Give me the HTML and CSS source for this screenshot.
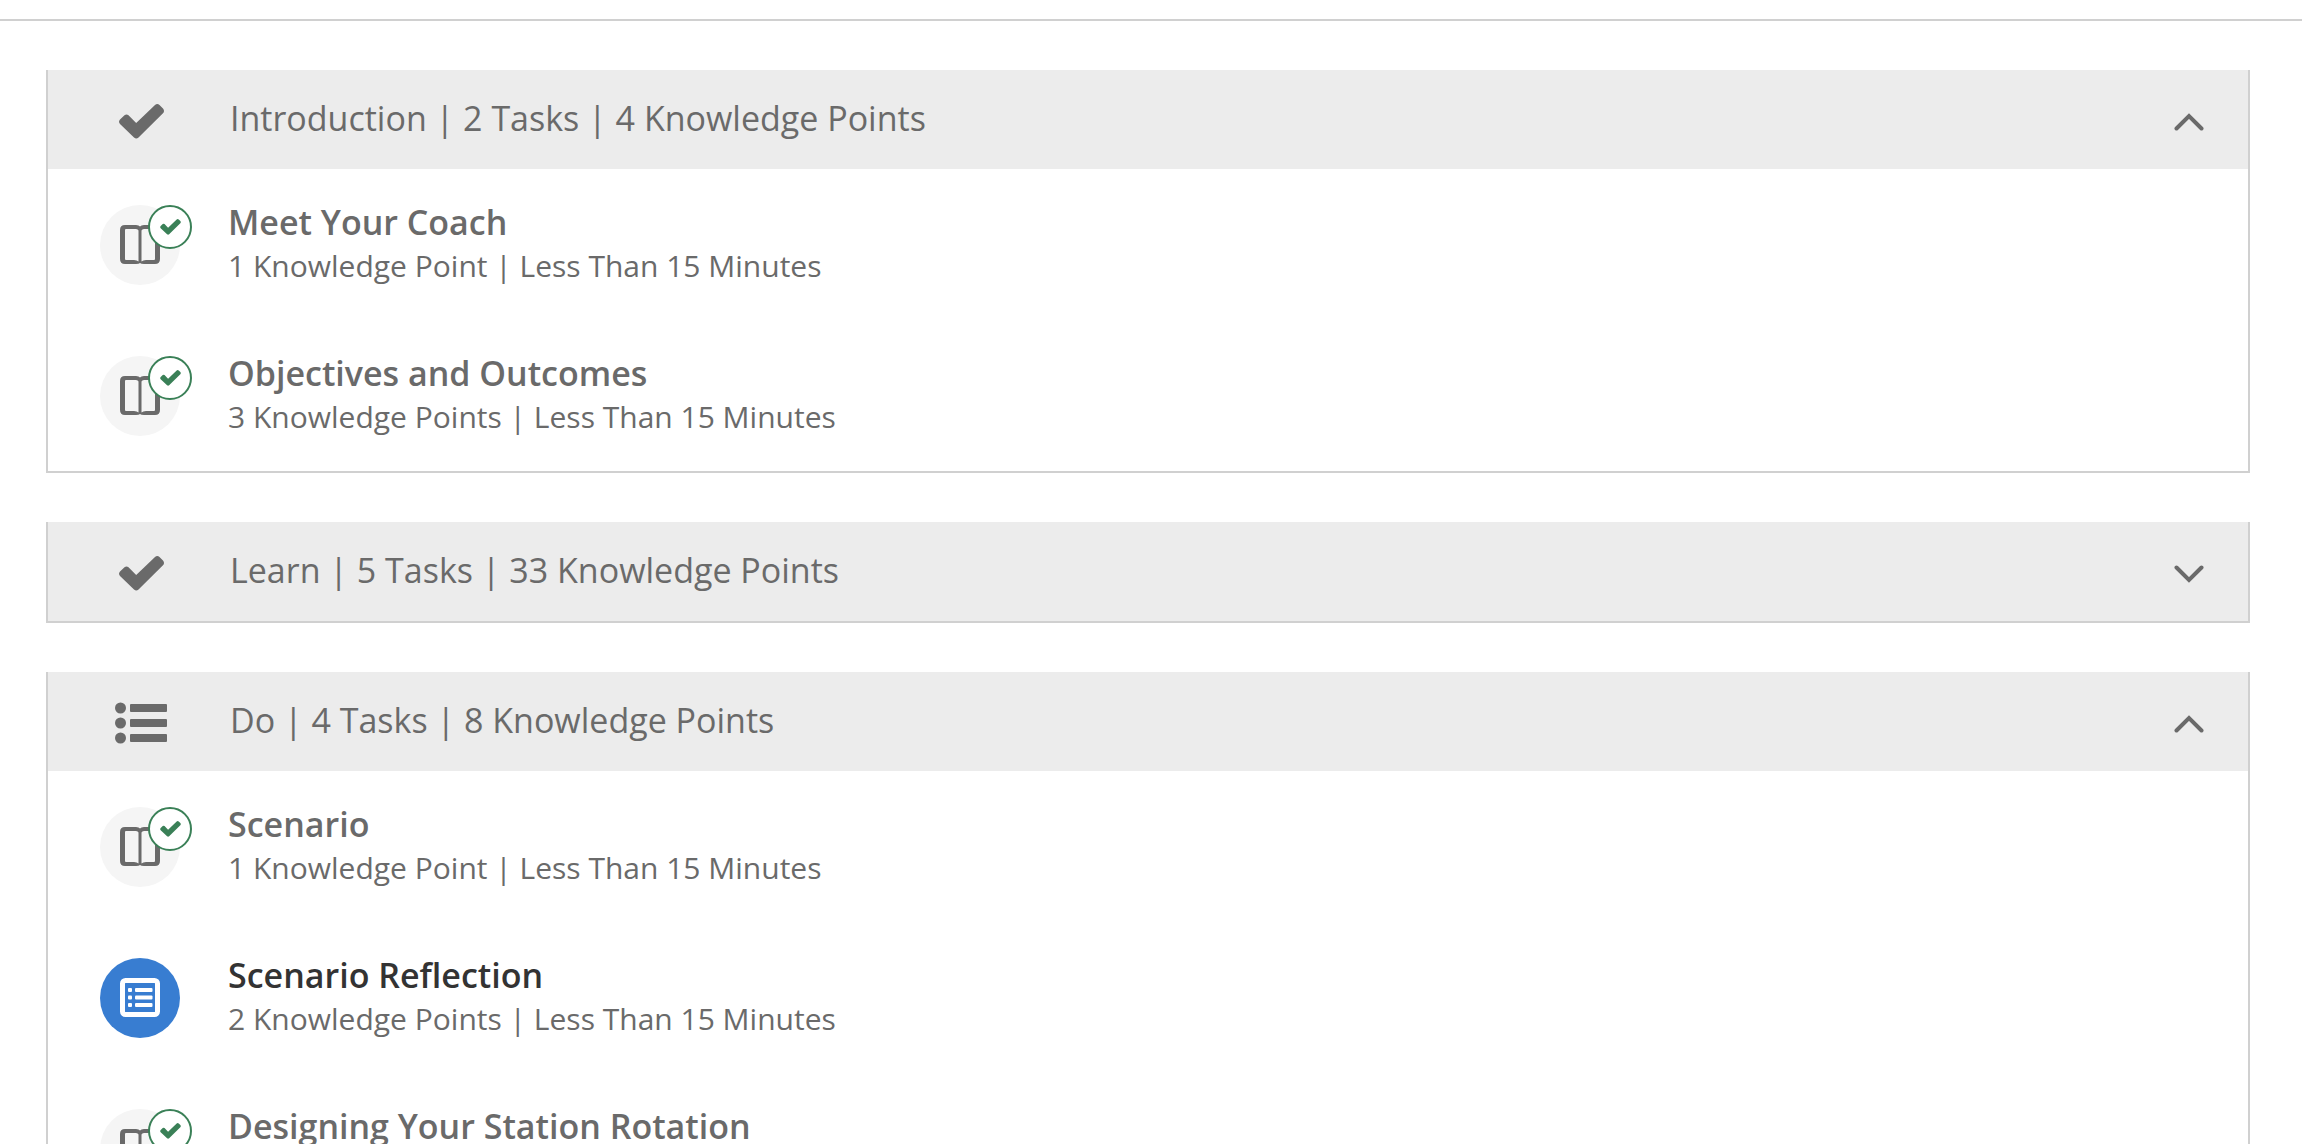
FILE: index.html
```html
<!DOCTYPE html>
<html lang="en">
<head>
    <meta charset="UTF-8">
    <meta name="viewport" content="width=device-width, initial-scale=1.0">
    <title>Course Tasks</title>
    <link rel="stylesheet" href="styles.css">
</head>
<body>
    <!-- shared icons -->
    <svg class="icon-defs" aria-hidden="true">
        <symbol id="icon-check" viewBox="0 0 45 35">
            <path d="M1 15.5 L5.5 11.2 Q7.5 9.8 9.5 11.2 L17.2 19 L36 1 Q38.3 -1 40.5 1 L44 4.5 Q46 7 44 9.2 L19.5 33.5 Q17.3 35.5 15 33.5 L1 20 Q-1 17.8 1 15.5 Z" fill="currentColor"/>
        </symbol>
        <symbol id="icon-list" viewBox="0 0 52 42">
            <g fill="currentColor">
                <circle cx="5.5" cy="6" r="5.5"/>
                <circle cx="5.5" cy="21" r="5.5"/>
                <circle cx="5.5" cy="36" r="5.5"/>
                <rect x="15" y="2" width="37" height="8" rx="1"/>
                <rect x="15" y="17" width="37" height="8" rx="1"/>
                <rect x="15" y="32" width="37" height="8" rx="1"/>
            </g>
        </symbol>
        <symbol id="icon-book" viewBox="0 0 40 40">
            <path fill="currentColor" fill-rule="evenodd" d="M5 0 H16 Q19 0 20 1.5 Q21 0 24 0 H35 Q40 0 40 5 V34 Q40 39 35 39 H24 Q21 39 20 38 Q19 39 16 39 H5 Q0 39 0 34 V5 Q0 0 5 0 Z M6 4 Q5 4 5 5 V34 Q5 35 6 35 H14 Q17 35 18.5 36.5 V5.5 Q18 4 16 4 Z M24 4 Q22 4 21.5 5.5 V36.5 Q23 35 26 35 H34 Q35 35 35 34 V5 Q35 4 34 4 Z"/>
        </symbol>
        <symbol id="icon-form" viewBox="0 0 40 40">
            <rect x="2.5" y="2.5" width="35" height="34" rx="3" fill="none" stroke="currentColor" stroke-width="5"/>
            <g fill="currentColor">
                <rect x="8" y="10" width="4" height="4" rx="1"/>
                <rect x="8" y="17.5" width="4" height="4" rx="1"/>
                <rect x="8" y="25" width="4" height="4" rx="1"/>
                <rect x="15" y="10" width="17.5" height="4" rx="1"/>
                <rect x="15" y="17.5" width="17.5" height="4" rx="1"/>
                <rect x="15" y="25" width="17.5" height="4" rx="1"/>
            </g>
        </symbol>
        <symbol id="icon-up" viewBox="0 0 30 18">
            <path d="M2.5 15.5 L15 3 L27.5 15.5" fill="none" stroke="currentColor" stroke-width="4" stroke-linecap="round"/>
        </symbol>
        <symbol id="icon-down" viewBox="0 0 30 18">
            <path d="M2.5 2.5 L15 15 L27.5 2.5" fill="none" stroke="currentColor" stroke-width="4" stroke-linecap="round"/>
        </symbol>
    </svg>

    <main class="module">
        <section class="panel">
            <button type="button" class="panel-header" aria-expanded="true">
                <span class="panel-status"><svg class="check"><use href="#icon-check"/></svg></span>
                <span class="panel-title">Introduction | 2 Tasks | 4 Knowledge Points</span>
                <svg class="chevron"><use href="#icon-up"/></svg>
            </button>
            <ul class="tasks">
                <li class="task">
                    <span class="task-icon">
                        <svg class="glyph"><use href="#icon-book"/></svg>
                        <span class="badge"><svg><use href="#icon-check"/></svg></span>
                    </span>
                    <div class="task-text">
                        <a href="#" class="task-name">Meet Your Coach</a>
                        <p class="task-info">1 Knowledge Point | Less Than 15 Minutes</p>
                    </div>
                </li>
                <li class="task">
                    <span class="task-icon">
                        <svg class="glyph"><use href="#icon-book"/></svg>
                        <span class="badge"><svg><use href="#icon-check"/></svg></span>
                    </span>
                    <div class="task-text">
                        <a href="#" class="task-name">Objectives and Outcomes</a>
                        <p class="task-info">3 Knowledge Points | Less Than 15 Minutes</p>
                    </div>
                </li>
            </ul>
        </section>

        <section class="panel">
            <button type="button" class="panel-header" aria-expanded="false">
                <span class="panel-status"><svg class="check"><use href="#icon-check"/></svg></span>
                <span class="panel-title">Learn | 5 Tasks | 33 Knowledge Points</span>
                <svg class="chevron"><use href="#icon-down"/></svg>
            </button>
        </section>

        <section class="panel">
            <button type="button" class="panel-header" aria-expanded="true">
                <span class="panel-status"><svg class="list"><use href="#icon-list"/></svg></span>
                <span class="panel-title">Do | 4 Tasks | 8 Knowledge Points</span>
                <svg class="chevron"><use href="#icon-up"/></svg>
            </button>
            <ul class="tasks">
                <li class="task">
                    <span class="task-icon">
                        <svg class="glyph"><use href="#icon-book"/></svg>
                        <span class="badge"><svg><use href="#icon-check"/></svg></span>
                    </span>
                    <div class="task-text">
                        <a href="#" class="task-name">Scenario</a>
                        <p class="task-info">1 Knowledge Point | Less Than 15 Minutes</p>
                    </div>
                </li>
                <li class="task current">
                    <span class="task-icon">
                        <svg class="glyph"><use href="#icon-form"/></svg>
                    </span>
                    <div class="task-text">
                        <a href="#" class="task-name">Scenario Reflection</a>
                        <p class="task-info">2 Knowledge Points | Less Than 15 Minutes</p>
                    </div>
                </li>
                <li class="task">
                    <span class="task-icon">
                        <svg class="glyph"><use href="#icon-book"/></svg>
                        <span class="badge"><svg><use href="#icon-check"/></svg></span>
                    </span>
                    <div class="task-text">
                        <a href="#" class="task-name">Designing Your Station Rotation</a>
                    </div>
                </li>
            </ul>
        </section>
    </main>
</body>
</html>
```
FILE: styles.css
```css
* {
    box-sizing: border-box;
}
html {
    scrollbar-width: none;
}
body {
    margin: 0;
    padding-top: 19px;
    font-family: "Open Sans", sans-serif;
    color: #6a6a6a;
    background-color: #fff;
}
.icon-defs {
    position: absolute;
    width: 0;
    height: 0;
}
.module {
    display: flex;
    flex-direction: column;
    gap: 49px;
    padding: 49px 52px 49px 46px;
    border-top: 2px solid #d0d0d0;
}
.panel {
    border: 2px solid #d0d0d0;
    border-top: none;
}
.panel-header {
    display: flex;
    align-items: center;
    width: 100%;
    height: 99px;
    padding: 0 44px 0 52px;
    border: none;
    background-color: #ececec;
    color: inherit;
    font-family: inherit;
    font-size: 34px;
    text-align: left;
    cursor: pointer;
}
.panel-status {
    display: flex;
    justify-content: center;
    width: 82px;
    margin-right: 48px;
    padding-top: 3px;
}
.panel-title {
    flex: 1;
    padding-bottom: 3px;
    line-height: 46px;
}
.check {
    width: 45px;
    height: 35px;
}
.list {
    width: 52px;
    height: 42px;
}
.chevron {
    width: 30px;
    height: 18px;
    margin-top: 5px;
}
.tasks {
    margin: 0;
    padding: 0;
    list-style: none;
}
.task {
    display: flex;
    gap: 48px;
    height: 151px;
    padding: 36px 52px 0;
}
.task-icon {
    position: relative;
    display: flex;
    align-items: center;
    justify-content: center;
    width: 80px;
    height: 80px;
    border-radius: 50%;
    background-color: #f5f5f5;
}
.glyph {
    width: 40px;
    height: 40px;
}
.badge {
    position: absolute;
    top: 0;
    right: -12px;
    display: flex;
    align-items: center;
    justify-content: center;
    width: 44px;
    height: 44px;
    border: 2px solid #3a8057;
    border-radius: 50%;
    background-color: #fff;
    color: #3a8057;
}
.badge svg {
    width: 21px;
    height: 16px;
}
.task-name {
    display: block;
    color: inherit;
    font-size: 34px;
    font-weight: 600;
    line-height: 34px;
    text-decoration: none;
}
.task-info {
    margin: 5px 0 0;
    font-size: 30px;
    line-height: 44px;
}
.current .task-icon {
    background-color: #387dd1;
    color: #fff;
}
.current .task-name {
    color: #333;
}
```
